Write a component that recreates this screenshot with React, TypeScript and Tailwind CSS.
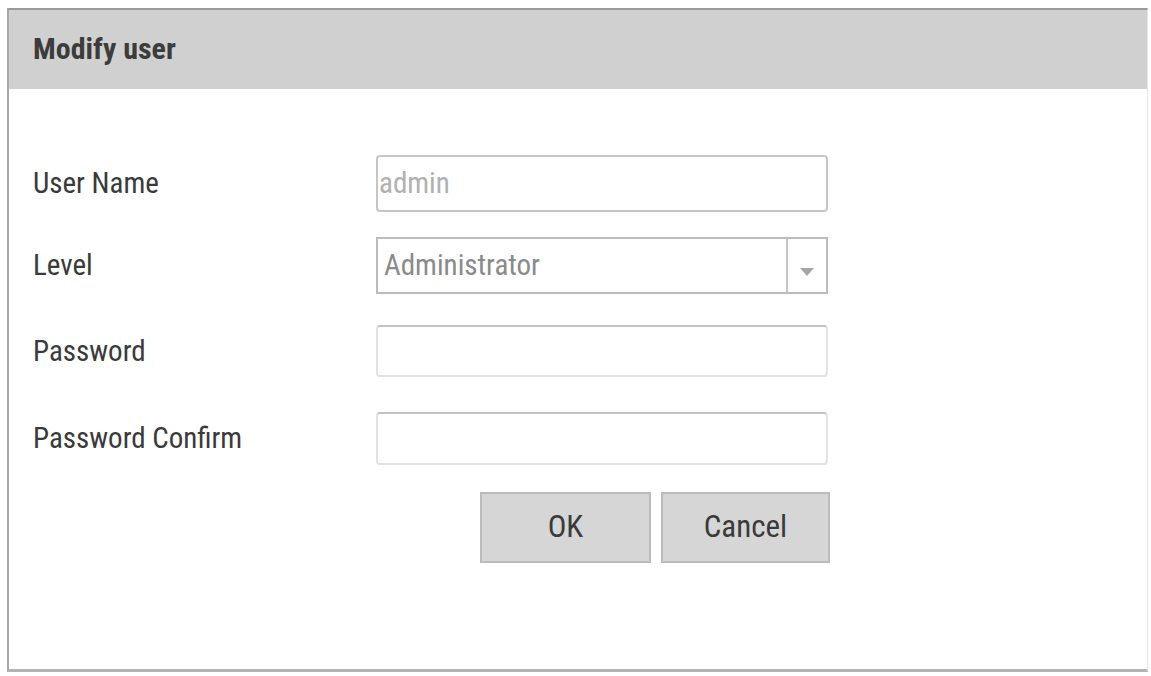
const font = "font-['Roboto_Condensed','Liberation_Sans',sans-serif]";

function Label({ children }: { children: React.ReactNode }) {
  return <div className="w-[343px] text-[29px] text-[#3a3a3a] leading-none">{children}</div>;
}

export default function App() {
  return (
    <div className={`w-[1151px] h-[676px] bg-white pt-2 pl-[7px] ${font}`}>
      <div className="w-[1141px] h-[664px] flex flex-col border-l-2 border-t-2 border-b-[3px] border-r border-l-[#a8a8a8] border-t-[#9a9a9a] border-b-[#b4b4b4] border-r-[#e6e6e6]">
        <div className="h-[79px] bg-[#d0d0d0] flex items-center pl-[24px] pb-[2px]">
          <span className="text-[30px] font-bold text-[#3c3c3c] leading-none">Modify user</span>
        </div>
        <div className="flex-1 pl-[24px] pt-[66px] flex flex-col">
          <div className="flex items-center">
            <Label>User Name</Label>
            <div className="w-[452px] h-[57px] border-2 border-[#c6c6c6] rounded-[4px] flex items-center pl-[1px] text-[29px] text-[#b0b0b0]">
              admin
            </div>
          </div>
          <div className="flex items-center mt-[25px]">
            <Label>Level</Label>
            <div className="w-[452px] h-[57px] border-2 border-[#bcbcbc] flex items-stretch">
              <div className="flex-1 flex items-center pl-[6px] text-[29px] text-[#8a8a8a]">Administrator</div>
              <div className="w-[40px] border-l-2 border-[#c4c4c4] flex items-center justify-center pt-[12px]">
                <svg width="16" height="10" viewBox="0 0 16 10">
                  <path d="M1 1 L15 1 L8 9 Z" fill="#a6a6a6" />
                </svg>
              </div>
            </div>
          </div>
          <div className="flex items-center mt-[31px]">
            <Label>Password</Label>
            <div className="w-[452px] h-[52px] border-2 border-[#e2e2e2] border-t-[#c2c2c2] rounded-[4px]" />
          </div>
          <div className="flex items-center mt-[35px]">
            <Label>Password Confirm</Label>
            <div className="w-[452px] h-[53px] border-2 border-[#e2e2e2] border-t-[#c2c2c2] rounded-[4px]" />
          </div>
          <div className="flex mt-[27px] pl-[447px] gap-[10px]">
            <div className="w-[171px] h-[71px] bg-[#d6d6d6] border-2 border-[#bcbcbc] flex items-center justify-center text-[31px] text-[#3a3a3a]">
              OK
            </div>
            <div className="w-[169px] h-[71px] bg-[#d6d6d6] border-2 border-[#bcbcbc] flex items-center justify-center text-[31px] text-[#3a3a3a]">
              Cancel
            </div>
          </div>
        </div>
      </div>
    </div>
  );
}
